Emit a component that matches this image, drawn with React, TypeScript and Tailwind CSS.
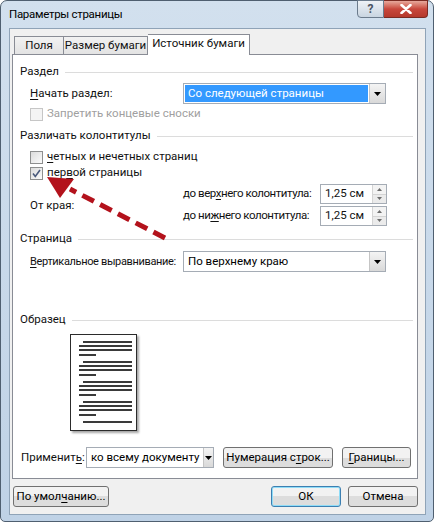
import React from "react";

function U({ children }: { children: React.ReactNode }) {
  return <span className="underline underline-offset-2">{children}</span>;
}

function DropBtn() {
  return (
    <div className="w-[16px] h-full border-l border-[#c5c5c5] bg-gradient-to-b from-[#f4f4f4] to-[#d9d9d9] flex items-center justify-center">
      <svg width="7" height="4" viewBox="0 0 7 4">
        <path d="M0 0h7L3.5 4z" fill="#000" />
      </svg>
    </div>
  );
}

function Select({ text, selected, w }: { text: string; selected?: boolean; w: string }) {
  return (
    <div className={`${w} h-[21px] border border-[#a5acb5] bg-white flex items-stretch`}>
      <div className="flex-1 flex items-center p-[1px]">
        <div
          className={`w-full h-full flex items-center px-[3px] ${
            selected ? "bg-[#3399ff] text-white" : "text-black"
          }`}
        >
          {text}
        </div>
      </div>
      <DropBtn />
    </div>
  );
}

function NumInput() {
  return (
    <div className="w-[67px] h-[20px] border border-[#a5acb5] bg-white flex items-stretch">
      <div className="flex-1 flex items-center pl-[4px]">1,25 см</div>
      <div className="w-[14px] border-l border-[#d4d4d4] flex flex-col">
        <div className="flex-1 flex items-center justify-center bg-[#f3f3f3] border-b border-[#d4d4d4]">
          <svg width="5" height="3" viewBox="0 0 5 3">
            <path d="M0 3h5L2.5 0z" fill="#6d6d6d" />
          </svg>
        </div>
        <div className="flex-1 flex items-center justify-center bg-[#ebebeb]">
          <svg width="5" height="3" viewBox="0 0 5 3">
            <path d="M0 0h5L2.5 3z" fill="#6d6d6d" />
          </svg>
        </div>
      </div>
    </div>
  );
}

function Check({ checked, disabled }: { checked?: boolean; disabled?: boolean }) {
  return (
    <div
      className={`w-[13px] h-[13px] border ${
        disabled ? "border-[#c6c6c6] bg-[#f4f4f4]" : "border-[#8e8f8f] bg-gradient-to-br from-[#dcdcdc] to-[#fbfbfb]"
      } flex items-center justify-center`}
    >
      {checked && (
        <svg width="9" height="9" viewBox="0 0 9 9">
          <path d="M1 4.5l2.3 3L8 1" stroke="#4a5a7c" strokeWidth="1.6" fill="none" />
        </svg>
      )}
    </div>
  );
}

function Btn({ children, w, focus }: { children: React.ReactNode; w: string; focus?: boolean }) {
  return (
    <div
      className={`${w} h-[21px] rounded-[3px] border ${
        focus ? "border-[#3c7fb1] shadow-[inset_0_0_0_1px_#8fdcf7]" : "border-[#707070]"
      } bg-gradient-to-b from-[#f2f2f2] from-50% to-[#dddddd] to-50% flex items-center justify-center text-black`}
    >
      <span>{children}</span>
    </div>
  );
}

function Header({ text }: { text: string }) {
  return (
    <div className="h-[16px] flex items-center pl-[7px] pr-[4px] gap-[6px]">
      <span>{text}</span>
      <div className="flex-1 h-[1px] bg-[#dcdcdc]" />
    </div>
  );
}

function Page() {
  const group = (i: number) => (
    <div key={i} className="flex flex-col gap-[2px]">
      <div className="ml-[12px] mr-[4px] h-[2px] bg-[#3a3a3a]" />
      <div className="ml-[8px] mr-[4px] h-[2px] bg-[#3a3a3a]" />
      <div className="ml-[8px] mr-[4px] h-[2px] bg-[#3a3a3a]" />
      <div className="ml-[8px] w-[17px] h-[2px] bg-[#3a3a3a] mt-[1px]" />
    </div>
  );
  return (
    <div className="w-[67px] h-[97px] border border-[#2b2b2b] bg-white shadow-[2px_2px_2px_rgba(0,0,0,0.35)] pt-[6px] flex flex-col gap-[5px]">
      {[0, 1, 2, 3].map(group)}
      <div className="flex flex-col gap-[8px]">
        <div className="ml-[12px] mr-[4px] h-[2px] bg-[#3a3a3a]" />
      </div>
    </div>
  );
}

export default function App() {
  return (
    <div className="w-[434px] h-[522px] relative overflow-hidden bg-white font-['Roboto',sans-serif] text-[11.5px] leading-none text-[#111] whitespace-nowrap">
      <div className="w-full h-full rounded-t-[7px] rounded-b-[5px] border border-[#4f5f70] bg-gradient-to-b from-[#d2e0ee] to-[#bfd2e6] flex flex-col">
        {/* title bar */}
        <div className="h-[27px] flex items-start justify-between">
          <div className="pl-[8px] pt-[8px] text-[11.5px] tracking-[-0.3px] text-black">Параметры страницы</div>
          <div className="flex mr-[5px] -mt-[1px]">
            <div className="w-[27px] h-[18px] border border-[#6b7b8c] rounded-bl-[4px] bg-gradient-to-b from-[#eef2f6] to-[#c9d5e1] flex items-center justify-center text-[#4a5563] text-[12px] font-bold">
              ?
            </div>
            <div className="w-[44px] h-[18px] border border-[#7a2a22] border-l-0 rounded-br-[4px] bg-gradient-to-b from-[#e6a89c] via-[#c8473c] to-[#b5392c] flex items-center justify-center">
              <svg width="12" height="10" viewBox="0 0 12 10">
                <path d="M1.5 1l9 8M10.5 1l-9 8" stroke="#fff" strokeWidth="2.6" strokeLinecap="round" />
              </svg>
            </div>
          </div>
        </div>
        {/* client */}
        <div className="ml-[8px] mr-[7px] mb-[6px] flex-1 bg-[#f0f0f0] border border-[#8fa3b7] flex flex-col pl-[2px] pr-[7px] pt-[5px]">
          {/* tabs */}
          <div className="h-[20px] flex items-end pl-[2px] relative z-10">
            <div className="w-[49px] h-[18px] border border-[#898c95] border-b-0 border-r-0 bg-gradient-to-b from-[#f2f2f2] to-[#e3e3e3] flex items-center justify-center">
              Поля
            </div>
            <div className="w-[85px] h-[18px] border border-[#898c95] border-b-0 bg-gradient-to-b from-[#f2f2f2] to-[#e3e3e3] flex items-center justify-center">
              Размер бумаги
            </div>
            <div className="w-[102px] h-[21px] -mb-[1px] border border-[#898c95] border-b-0 border-l-0 bg-white flex items-center justify-center pb-[2px]">
              Источник бумаги
            </div>
          </div>
          {/* panel */}
          <div className="h-[425px] border border-[#898c95] bg-white flex flex-col pt-[9px]">
            <Header text="Раздел" />
            <div className="mt-[3px] h-[21px] flex items-center pl-[17px]">
              <div className="w-[153px]">
                <U>Н</U>ачать раздел:
              </div>
              <Select text="Со следующей страницы" selected w="w-[203px]" />
            </div>
            <div className="mt-[2px] h-[16px] flex items-center pl-[17px] gap-[4px] text-[#a0a0a0]">
              <Check disabled />
              <span>Запретить концевые сноски</span>
            </div>
            <div className="mt-[6px]">
              <Header text="Различать колонтитулы" />
            </div>
            <div className="mt-[5px] h-[16px] flex items-center pl-[17px] gap-[4px]">
              <Check />
              <span>
                <U>ч</U>етных и нечетных страниц
              </span>
            </div>
            <div className="h-[16px] flex items-center pl-[17px] gap-[4px]">
              <Check checked />
              <span>
                пер<U>в</U>ой страницы
              </span>
            </div>
            <div className="mt-[3px] flex pl-[17px]">
              <div className="w-[153px] flex items-center pt-[2px]">От края:</div>
              <div className="flex flex-col gap-[2px]">
                <div className="flex items-center h-[20px]">
                  <div className="w-[137px] tracking-[-0.45px]">
                    до вер<U>х</U>него колонтитула:
                  </div>
                  <NumInput />
                </div>
                <div className="flex items-center h-[20px]">
                  <div className="w-[137px] tracking-[-0.45px]">
                    до ни<U>ж</U>него колонтитула:
                  </div>
                  <NumInput />
                </div>
              </div>
            </div>
            <div className="mt-[5px]">
              <Header text="Страница" />
            </div>
            <div className="mt-[4px] h-[21px] flex items-center pl-[17px]">
              <div className="w-[153px] text-[11px] tracking-[-0.35px]">
                <U>В</U>ертикальное выравнивание:
              </div>
              <Select text="По верхнему краю" w="w-[203px]" />
            </div>
            <div className="mt-[40px]">
              <Header text="Образец" />
            </div>
            <div className="mt-[6px] pl-[57px]">
              <Page />
            </div>
            <div className="mt-auto mb-[10px] h-[21px] flex items-center pl-[8px]">
              <div className="w-[65px]">
                Применит<U>ь</U>:
              </div>
              <Select text="ко всему документу" w="w-[128px]" />
              <div className="ml-[9px]">
                <Btn w="w-[110px]">
                  Нумерация с<U>т</U>рок...
                </Btn>
              </div>
              <div className="ml-[9px]">
                <Btn w="w-[69px]">
                  <U>Г</U>раницы...
                </Btn>
              </div>
            </div>
          </div>
          {/* bottom buttons */}
          <div className="mt-[7px] h-[21px] flex items-center pl-[1px]">
            <Btn w="w-[96px]">
              По умол<U>ч</U>анию...
            </Btn>
            <div className="ml-auto flex gap-[7px]">
              <Btn w="w-[70px]" focus>
                ОК
              </Btn>
              <Btn w="w-[70px]">Отмена</Btn>
            </div>
          </div>
        </div>
      </div>
      {/* red dashed arrow overlay */}
      <svg className="absolute left-0 top-0 pointer-events-none" width="434" height="522" viewBox="0 0 434 522">
        <line x1="165" y1="238" x2="70" y2="189" stroke="#b3121c" strokeWidth="5" strokeDasharray="13 7" />
        <polygon points="47,177 74,179 60,198" fill="#b3121c" />
      </svg>
    </div>
  );
}
